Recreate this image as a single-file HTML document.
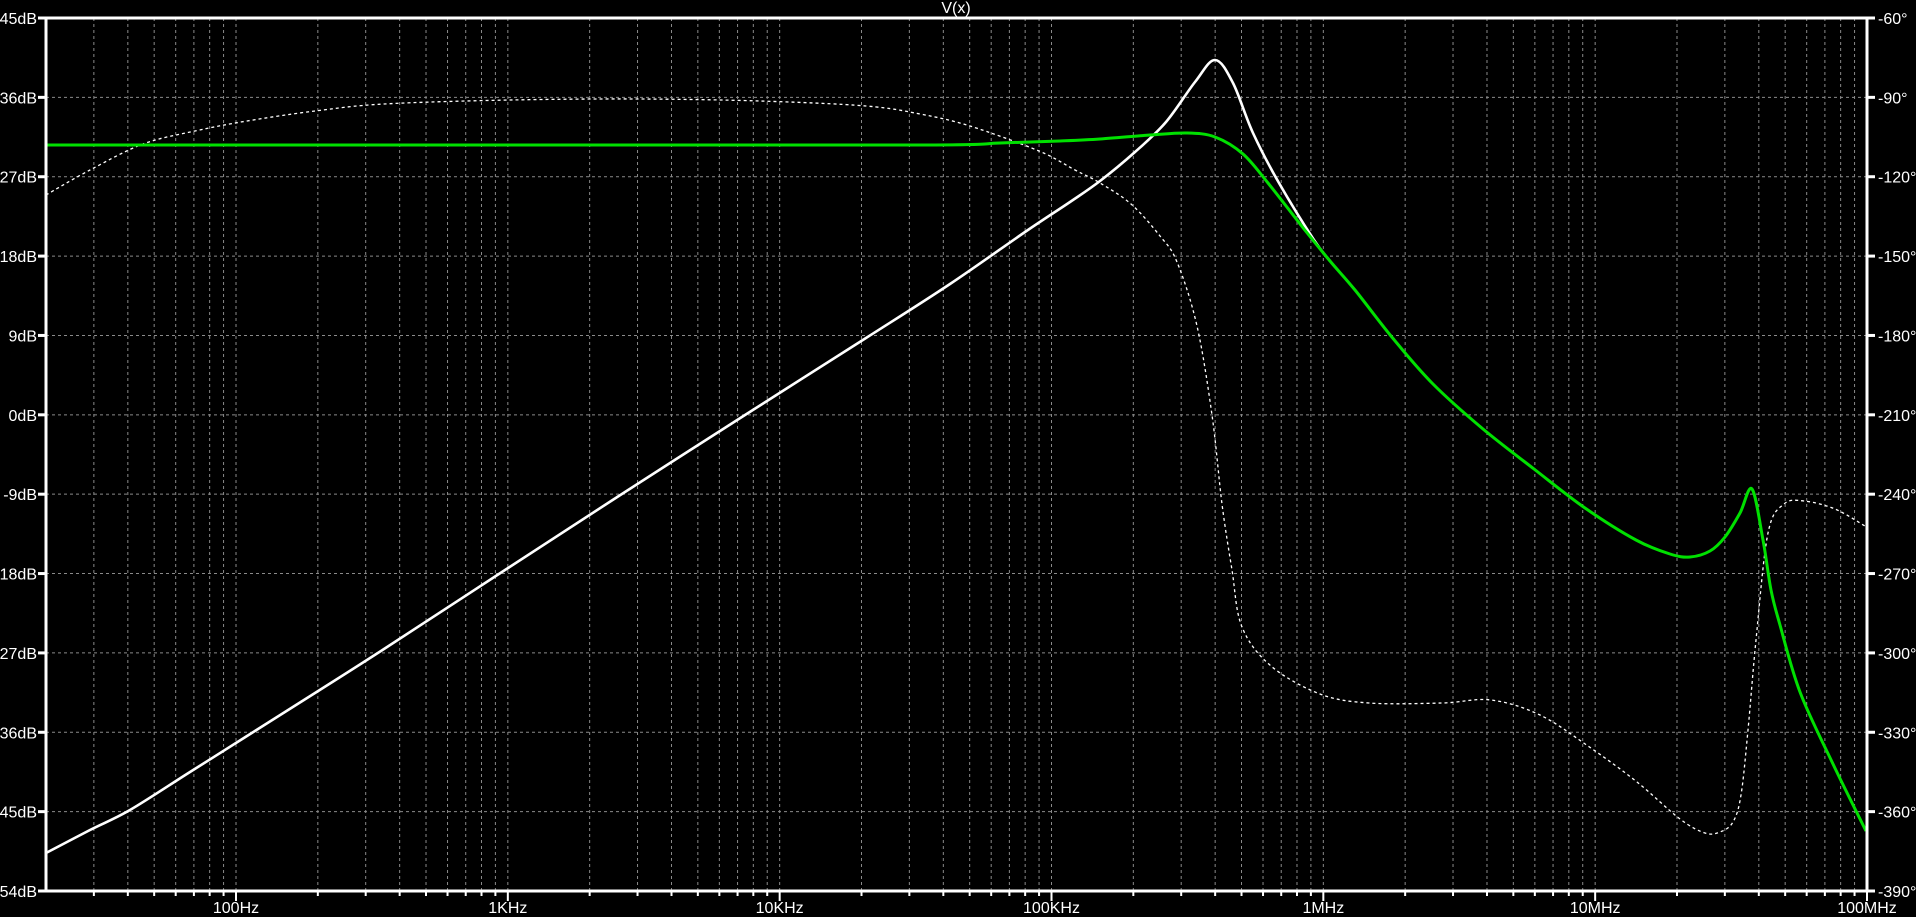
<!DOCTYPE html>
<html><head><meta charset="utf-8"><style>
html,body{margin:0;padding:0;background:#000;width:1916px;height:917px;overflow:hidden}
svg{display:block}
text{font-family:"Liberation Sans",sans-serif;font-size:16px;fill:#fff}
</style></head><body>
<svg id="s" width="1916" height="917" viewBox="0 0 1916 917">
<text x="956" y="13" text-anchor="middle" font-size="13">V(x)</text>
<g id="grid" stroke="#8a8a8a" stroke-width="1" stroke-dasharray="3,3"></g>
<g id="lab"></g>
<path id="ph" fill="none" stroke="#fff" stroke-width="1.3" stroke-dasharray="3,3"/>
<path id="wm" fill="none" stroke="#fff" stroke-width="2.6"/>
<path id="gm" fill="none" stroke="#00e000" stroke-width="3"/>
<rect x="46" y="18" width="1821" height="873" fill="none" stroke="#fff" stroke-width="3"/>
<g id="tk" stroke="#fff" stroke-width="3"></g>
</svg>
<script>
var L=46,R=1867,T=18,B=891,dec=(R-L)/6.6990,s0=Math.log10(20);
function fx(f){return L+(Math.log10(f)-s0)*dec}
var g=document.getElementById('grid'),lab=document.getElementById('lab'),tk=document.getElementById('tk'),NS='http://www.w3.org/2000/svg';
function el(p,n,a,t){var e=document.createElementNS(NS,n);for(var k in a)e.setAttribute(k,a[k]);if(t)e.textContent=t;p.appendChild(e);return e}
var names={2:'100Hz',3:'1KHz',4:'10KHz',5:'100KHz',6:'1MHz',7:'10MHz',8:'100MHz'};
for(var d=1;d<=8;d++)for(var m=1;m<=9;m++){var f=m*Math.pow(10,d);if(f<=20||f>1e8)continue;var x=fx(f);
 if(f<1e8)el(g,'line',{x1:x,y1:T,x2:x,y2:B});
 el(tk,'line',{x1:x,y1:B,x2:x,y2:B+(m==1?10:5),'stroke-width':2});
 if(m==1)el(lab,'text',{x:x,y:913,'text-anchor':'middle'},names[d]);}
for(var i=0;i<=11;i++){var y=T+i*(B-T)/11;if(i>0&&i<11)el(g,'line',{x1:L,y1:y,x2:R,y2:y});
 el(tk,'line',{x1:L-8,y1:y,x2:L,y2:y});el(tk,'line',{x1:R,y1:y,x2:R+8,y2:y});
 el(lab,'text',{x:L-9,y:y+6,'text-anchor':'end'},(45-9*i)+'dB');
 el(lab,'text',{x:R+11,y:y+6},(-60-30*i)+'°');}
function path(p){var d='M'+p[0][0]+','+p[0][1];
 for(var i=0;i<p.length-1;i++){var p0=p[i-1]||p[i],p1=p[i],p2=p[i+1],p3=p[i+2]||p2;
 d+='C'+(p1[0]+(p2[0]-p0[0])/6).toFixed(1)+','+(p1[1]+(p2[1]-p0[1])/6).toFixed(1)+' '+(p2[0]-(p3[0]-p1[0])/6).toFixed(1)+','+(p2[1]-(p3[1]-p1[1])/6).toFixed(1)+' '+p2[0]+','+p2[1];}
 return d}
document.getElementById('wm').setAttribute('d',path([[46,853],[90,830],[130,810],[190,772],[247,736],[315,693],[384,649],[505,570],[625,492],[745,415],[866,338],[950,284],[1025,232],[1070,202],[1100,181],[1135,152],[1166,122],[1195,82],[1215,60],[1233,83],[1253,133],[1279,183],[1314,240],[1330,261]]));
document.getElementById('gm').setAttribute('d',path([[46,145],[500,145],[921,145],[1000,143],[1060,141],[1100,139],[1150,135],[1187,133],[1215,137],[1243,154],[1268,183],[1304,229],[1330,261],[1355,290],[1391,336],[1432,383],[1483,429],[1534,469],[1585,508],[1636,540],[1670,554],[1690,557],[1710,551],[1725,537],[1740,513],[1752,489],[1763,540],[1771,590],[1780,625],[1800,692],[1833,764],[1866,831]]));
document.getElementById('ph').setAttribute('d',path([[46,195],[90,170],[143,144],[195,131],[247,121],[315,111],[384,104],[510,100],[639,99],[760,101],[866,106],[920,114],[970,126],[1039,151],[1075,170],[1100,183],[1131,204],[1160,236],[1177,262],[1197,326],[1212,415],[1222,504],[1232,570],[1242,627],[1271,666],[1320,694],[1369,703],[1442,703],[1491,700],[1540,715],[1588,746],[1637,782],[1680,819],[1705,833],[1720,832],[1733,822],[1741,795],[1748,730],[1756,640],[1768,533],[1784,504],[1804,501],[1835,509],[1865,526]]));
</script>
</body></html>
